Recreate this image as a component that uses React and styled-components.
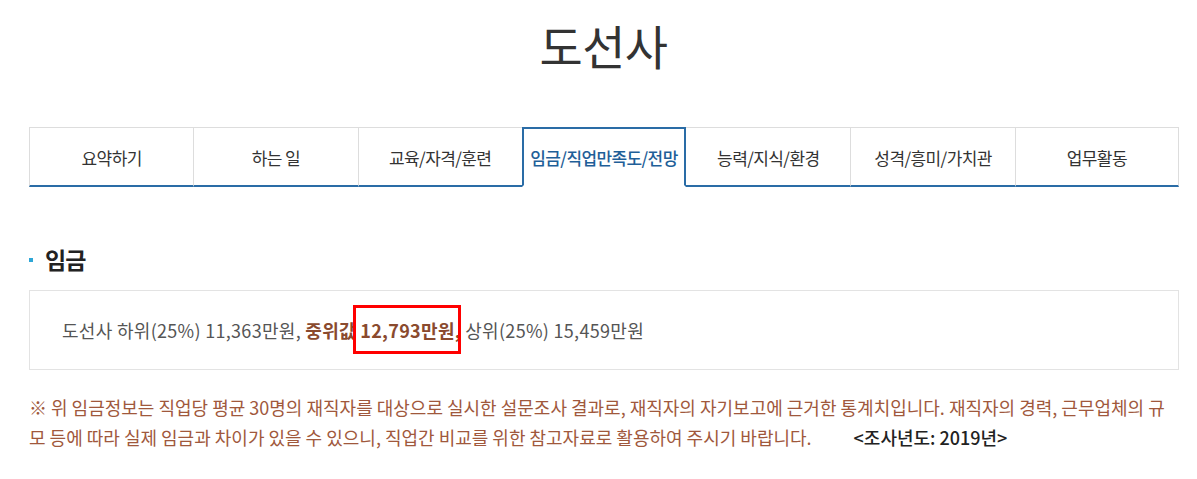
import React from "react";
import styled, { createGlobalStyle } from "styled-components";

const Global = createGlobalStyle`
  html, body { margin: 0; padding: 0; background: #fff; }
  body { font-family: "Noto Sans CJK KR", "Noto Sans", sans-serif; color: #333; }
  * { box-sizing: border-box; }
`;

const Page = styled.div`
  width: 1197px;
  padding: 0 19px 0 29px;
`;

const Title = styled.h1`
  margin: 0;
  padding-top: 13px;
  height: 127px;
  text-align: center;
  font-size: 47px;
  font-weight: 400;
  letter-spacing: -0.6px;
  line-height: 64px;
  color: #333;
`;

const TabBar = styled.ul`
  list-style: none;
  margin: 0;
  padding: 0;
  display: grid;
  grid-template-columns: repeat(7, 1fr);
  width: 1150px;
`;

const Tab = styled.li`
  height: 60px;
  display: flex;
  align-items: center;
  justify-content: center;
  font-size: 17px;
  letter-spacing: -0.6px;
  color: ${(p) => (p.$active ? "#1f5f98" : "#333")};
  font-weight: ${(p) => (p.$active ? 500 : 400)};
  background: #fff;
  border-top: ${(p) => (p.$active ? "2px solid #2a6ca6" : "1px solid #ddd")};
  border-bottom: ${(p) => (p.$active ? "2px solid transparent" : "2px solid #2a6ca6")};
  border-left: ${(p) =>
    p.$active ? "2px solid #2a6ca6" : p.$afterActive ? "none" : "1px solid #ddd"};
  border-right: ${(p) =>
    p.$active ? "2px solid #2a6ca6" : p.$last ? "1px solid #ddd" : "none"};
  padding-top: 1px;
`;

const SectionTitle = styled.h2`
  margin: 57px 0 0;
  display: flex;
  align-items: center;
  gap: 12px;
  font-size: 23px;
  font-weight: 700;
  line-height: 30px;
  letter-spacing: -0.8px;
  color: #222;
  &::before {
    content: "";
    width: 4px;
    height: 4px;
    background: #2ea6d6;
    margin-top: 2px;
  }
`;

const Box = styled.div`
  margin-top: 16px;
  width: 1150px;
  height: 80px;
  border: 1px solid #e3e3e3;
  padding: 0 32px;
  display: flex;
  align-items: center;
  font-size: 18px;
  letter-spacing: 0.3px;
  color: #555;
  white-space: pre;
`;

const Strong = styled.b`
  font-weight: 700;
  color: #8a4a2e;
`;

const Marked = styled.span`
  position: relative;
  &::after {
    content: "";
    position: absolute;
    left: -7px;
    right: -6px;
    top: -12px;
    bottom: -11px;
    border: 3px solid #f00;
  }
`;

const Note = styled.p`
  margin: 22px 0 0;
  width: 1150px;
  font-size: 18px;
  line-height: 30px;
  letter-spacing: 0;
  color: #a0583c;
`;

const Year = styled.span`
  margin-left: 42px;
  color: #222;
  font-weight: 500;
`;

const tabs = [
  "요약하기",
  "하는 일",
  "교육/자격/훈련",
  "임금/직업만족도/전망",
  "능력/지식/환경",
  "성격/흥미/가치관",
  "업무활동",
];

export default function App() {
  const activeIndex = 3;
  return (
    <Page>
      <Global />
      <Title>도선사</Title>
      <TabBar>
        {tabs.map((t, i) => (
          <Tab
            key={t}
            $active={i === activeIndex}
            $afterActive={i === activeIndex + 1}
            $last={i === tabs.length - 1}
          >
            {t}
          </Tab>
        ))}
      </TabBar>
      <SectionTitle>임금</SectionTitle>
      <Box>
        {"도선사 하위(25%) 11,363만원, "}
        <Strong>
          {"중위값 "}
          <Marked>12,793만원</Marked>,
        </Strong>
        {" 상위(25%) 15,459만원"}
      </Box>
      <Note>
        ※ 위 임금정보는 직업당 평균 30명의 재직자를 대상으로 실시한 설문조사 결과로, 재직자의 자기보고에 근거한 통계치입니다. 재직자의 경력, 근무업체의 규모 등에 따라 실제 임금과 차이가 있을 수 있으니, 직업간 비교를 위한 참고자료로 활용하여 주시기 바랍니다.
        <Year>&lt;조사년도: 2019년&gt;</Year>
      </Note>
    </Page>
  );
}
